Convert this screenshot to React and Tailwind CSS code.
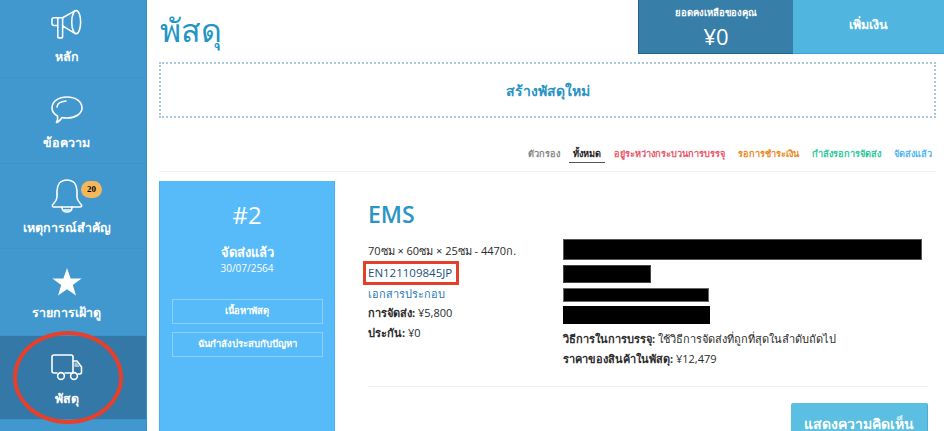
import React from "react";

function Megaphone() {
  return (
    <svg width="31" height="31" viewBox="0 0 32 32" fill="none" stroke="white" strokeWidth="1.6" strokeLinejoin="round" strokeLinecap="round">
      <ellipse cx="26" cy="13.5" rx="4.6" ry="12" />
      <path d="M25 1.6 L12 9 H3 Q1 9 1 11 V15 Q1 17 3 17 H7 V28 Q7 30 9 30 H10 Q12 30 12 28 V17 L12 17.5 L25 25.4" />
      <path d="M12 9 V17.5 M7 9 V17" />
    </svg>
  );
}
function Bubble() {
  return (
    <svg width="32" height="28" viewBox="0 0 32 28" fill="none" stroke="white" strokeWidth="1.6" strokeLinejoin="round" strokeLinecap="round">
      <path d="M16 1 C24 1 31 5 31 12 C31 18 24 22 16 22 C14 22 12.5 22 11 21.5 C9.5 24 7.5 26 5.5 26.5 C6.5 25 7 22.5 6.5 20 C3 18 1 15 1 12 C1 5 8 1 16 1 Z" />
      <path d="M6 11 C6 7.5 10 5.5 15 5" />
    </svg>
  );
}
function Bell() {
  return (
    <svg width="32" height="34" viewBox="0 0 32 34" fill="none" stroke="white" strokeWidth="1.6" strokeLinejoin="round" strokeLinecap="round">
      <path d="M16 1 C9 1 6 6 6 12 V18 C6 22 3 24 1.5 26 C1 27 1.5 28 3 28 H29 C30.5 28 31 27 30.5 26 C29 24 26 22 26 18 V12 C26 6 23 1 16 1 Z" />
      <path d="M11 28 C11 32 14 33 16 33 C18 33 21 32 21 28" />
      <path d="M13 31 H19" />
    </svg>
  );
}
function Star() {
  return (
    <svg width="30" height="28" viewBox="0 0 30 28" fill="white">
      <path d="M15 0 L18.6 10.4 H29.6 L20.8 17 L24 27.6 L15 21.2 L6 27.6 L9.2 17 L0.4 10.4 H11.4 Z" />
    </svg>
  );
}
function Truck() {
  return (
    <svg width="32" height="27" viewBox="0 0 32 27" fill="none" stroke="white" strokeWidth="1.6" strokeLinejoin="round" strokeLinecap="round">
      <path d="M6 19 H3 Q1 19 1 17 V3 Q1 1 3 1 H20 Q22 1 22 3 V19 H14" />
      <path d="M22 7 H26 L30.5 13 V18 Q30.5 20 29 20 H27" />
      <path d="M23.5 8.5 H25.8 L28.6 13 H23.5 Z" fill="#a5c4d9" stroke="none" />
      <circle cx="10" cy="22" r="3.4" />
      <circle cx="23" cy="22" r="3.4" />
    </svg>
  );
}

function NavItem({ icon, label, active, badge, heightClass, iconClass, labelClass }) {
  return (
    <div className={`relative flex flex-col items-center pr-[13px] border-b border-[#3c93ca] ${heightClass} ${active ? "bg-[#3378a6]" : ""}`}>
      <div className={`h-[50px] flex items-end justify-center ${iconClass}`}>{icon}</div>
      <div className={`text-[12.5px] leading-[20px] font-bold text-white whitespace-nowrap ${labelClass}`}>{label}</div>
      {badge && (
        <span className="absolute left-[81px] top-[17px] w-[21px] h-[17px] rounded-full bg-[#f5b75c] text-black text-[9px] font-bold flex items-center justify-center font-['Liberation_Serif',serif]">
          {badge}
        </span>
      )}
    </div>
  );
}

export default function App() {
  return (
    <div className="relative w-[944px] h-[431px] overflow-hidden bg-white flex font-['Open_Sans','Noto_Sans','DejaVu_Sans',sans-serif] text-[#2b2b2b]">
      <aside className="w-[147px] shrink-0 h-[448px] bg-[#4098cf] border-r border-[#2d93d0] -mt-[8px]">
        <NavItem icon={<Megaphone />} label="หลัก" heightClass="h-[86px]" iconClass="pb-[2px]" labelClass="mt-[5px]" />
        <NavItem icon={<Bubble />} label="ข้อความ" heightClass="h-[86px]" iconClass="pb-[4px]" labelClass="mt-[5px]" />
        <NavItem icon={<Bell />} label="เหตุการณ์สำคัญ" badge="20" heightClass="h-[85px]" iconClass="pb-[1px]" labelClass="mt-[4px]" />
        <NavItem icon={<Star />} label="รายการเฝ้าดู" heightClass="h-[87px]" iconClass="pb-[3px]" labelClass="mt-[4px]" />
        <NavItem icon={<Truck />} label="พัสดุ" active heightClass="h-[84px]" iconClass="pb-[5px]" labelClass="mt-[3px]" />
      </aside>

      <main className="flex-1 min-w-0 pl-[12px] pr-[8px]">
        <div className="flex justify-between h-[62px]">
          <h1 className="text-[32px] leading-[44px] pt-[8px] pl-[1px] font-normal text-[#2196c4]">พัสดุ</h1>
          <div className="flex h-[54px] -mr-[8px]">
            <div className="w-[155px] bg-[#377ea9] border-l border-b border-[#23648f] flex flex-col items-center text-white">
              <div className="text-[9.5px] leading-[14px] mt-[6px] font-bold">ยอดคงเหลือของคุณ</div>
              <div className="text-[22px] leading-[28px] mt-[2px]">¥0</div>
            </div>
            <div className="w-[151px] bg-[#50b6e0] border-b border-[#3ea5d3] flex items-center justify-center text-white text-[12.5px] font-bold pb-[3px]">เพิ่มเงิน</div>
          </div>
        </div>

        <div className="h-[56px] border-2 border-dotted border-[#a9c9df] flex items-center justify-center text-[14px] font-semibold text-[#2a93c4]">
          สร้างพัสดุใหม่
        </div>

        <div className="h-[54px] flex justify-end items-end border-b border-[#efefef] text-[9.2px] font-semibold">
          <div className="flex items-center gap-[13px] pb-[10px] pr-[4px] whitespace-nowrap">
            <span className="text-[#8a8a8a]">ตัวกรอง</span>
            <span className="text-[#222] border-b border-[#555] px-[4px] pb-[1px] -mb-[2px] -mx-[4px]">ทั้งหมด</span>
            <span className="text-[#e8566a]">อยู่ระหว่างกระบวนการบรรจุ</span>
            <span className="text-[#e98a1c]">รอการชำระเงิน</span>
            <span className="text-[#2fc79e]">กำลังรอการจัดส่ง</span>
            <span className="text-[#55b7f5]">จัดส่งแล้ว</span>
          </div>
        </div>

        <div className="mt-[9px] flex">
          <div className="w-[176px] h-[260px] shrink-0 bg-[#57baf9] border-x border-[#48aeee] flex flex-col items-center text-white px-[12px]">
            <div className="text-[24px] leading-[32px] mt-[18px]">#2</div>
            <div className="text-[13px] leading-[16px] font-bold mt-[13px]">จัดส่งแล้ว</div>
            <div className="text-[10px] leading-[14px] mt-[1px]">30/07/2564</div>
            <div className="w-[151px] h-[25px] mt-[24px] shrink-0 border border-[#8bd0fb] flex items-center justify-center text-[9.5px] font-semibold">เนื้อหาพัสดุ</div>
            <div className="w-[151px] h-[25px] mt-[8px] shrink-0 border border-[#8bd0fb] flex items-center justify-center text-[9.5px] font-semibold">ฉันกำลังประสบกับปัญหา</div>
          </div>

          <div className="flex-1 min-w-0 pl-[33px] pr-[8px]">
            <div className="text-[23px] leading-[28px] font-semibold text-[#2a96c6] mt-[19px]">EMS</div>
            <div className="flex mt-[9px]">
              <div className="w-[195px] shrink-0 text-[11.5px] leading-[20px] pt-[4px]">
                <div className="h-[22px] text-[11px]">70ซม × 60ซม × 25ซม - 4470ก.</div>
                <div className="h-[21px] text-[#23527c] relative">
                  EN121109845JP
                  <span className="absolute left-[-5px] top-[-2px] w-[96px] h-[24px] border-[3px] border-[#e33f2b]" />
                </div>
                <div className="h-[19px] text-[11px] text-[#2a7ab8]">เอกสารประกอบ</div>
                <div className="h-[20px] text-[11px]"><b>การจัดส่ง:</b> ¥5,800</div>
                <div className="h-[20px] text-[11px]"><b>ประกัน:</b> ¥0</div>
              </div>
              <div className="flex-1 min-w-0 text-[11px] leading-[20px] pt-[2px]">
                <div className="w-[359px] h-[21px] bg-black border border-[#555]" />
                <div className="w-[88px] h-[18px] mt-[5px] bg-black border border-[#444]" />
                <div className="w-[146px] h-[14px] mt-[5px] bg-black border border-[#666]" />
                <div className="w-[147px] h-[18px] mt-[4px] bg-black" />
                <div className="mt-[5px] h-[20px]"><b>วิธีการในการบรรจุ:</b> ใช้วิธีการจัดส่งที่ถูกที่สุดในลำดับถัดไป</div>
                <div className="h-[20px]"><b>ราคาของสินค้าในพัสดุ:</b> ¥12,479</div>
              </div>
            </div>
            <div className="mt-[17px] border-t border-[#eeeeee] flex justify-end">
              <div className="mt-[16px] w-[137px] h-[40px] bg-[#5abfe0] border-r border-[#48aed2] rounded-t-[2px] flex items-center justify-center text-white text-[14px] font-semibold">แสดงความคิดเห็น</div>
            </div>
          </div>
        </div>
      </main>

      <div className="absolute left-[13px] top-[331px] w-[110px] h-[93px] rounded-[50%] border-[4px] border-[#e63f2b]" />
    </div>
  );
}
